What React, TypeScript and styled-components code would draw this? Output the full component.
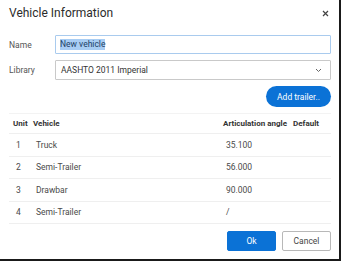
import React from 'react'
import styled, { createGlobalStyle } from 'styled-components'

const GlobalStyle = createGlobalStyle`
  html, body {
    margin: 0;
    padding: 0;
    background: #ffffff;
  }
  * {
    box-sizing: border-box;
  }
`

const trailers = [
  { unit: 1, vehicle: 'Truck', angle: '35.100' },
  { unit: 2, vehicle: 'Semi-Trailer', angle: '56.000' },
  { unit: 3, vehicle: 'Drawbar', angle: '90.000' },
  { unit: 4, vehicle: 'Semi-Trailer', angle: '/' },
]

const App: React.FC = () => {
  return (
    <>
      <GlobalStyle />
      <StyledDialog>
        <StyledHeader>
          <StyledTitle>Vehicle Information</StyledTitle>
          <StyledClose aria-label="Close">
            <svg width="7" height="7" viewBox="0 0 7 7">
              <path d="M1 1 L6 6 M6 1 L1 6" stroke="#444" strokeWidth="1.2" fill="none" />
            </svg>
          </StyledClose>
        </StyledHeader>

        <StyledForm>
          <StyledLabel>Name</StyledLabel>
          <StyledTextField $focused>
            <StyledSelection>New vehicle</StyledSelection>
          </StyledTextField>
          <StyledLabel>Library</StyledLabel>
          <StyledTextField>
            <span style={{ flex: 1 }}>AASHTO 2011 Imperial</span>
            <svg width="7" height="5" viewBox="0 0 7 5">
              <polyline points="1,1 3.5,3.5 6,1" stroke="#666" strokeWidth="1" fill="none" />
            </svg>
          </StyledTextField>
        </StyledForm>

        <StyledActions>
          <StyledPillButton>Add trailer..</StyledPillButton>
        </StyledActions>

        <StyledTable>
          <StyledRow $head>
            <StyledCell $head>Unit</StyledCell>
            <StyledCell $head>Vehicle</StyledCell>
            <StyledCell $head>Articulation angle</StyledCell>
            <StyledCell $head>Default</StyledCell>
          </StyledRow>
          {trailers.map((t) => (
            <StyledRow key={t.unit}>
              <StyledCell>{t.unit}</StyledCell>
              <StyledCell>{t.vehicle}</StyledCell>
              <StyledCell>{t.angle}</StyledCell>
              <StyledCell />
            </StyledRow>
          ))}
        </StyledTable>

        <StyledFooter>
          <StyledButton $primary>Ok</StyledButton>
          <StyledButton>Cancel</StyledButton>
        </StyledFooter>
      </StyledDialog>
    </>
  )
}

const StyledDialog = styled.div`
  width: 341px;
  height: 261px;
  padding: 0 8px 0 9px;
  background: #ffffff;
  border-right: 2px solid #1a1a1a;
  border-bottom: 2px solid #1a1a1a;
  font-family: Roboto, 'Liberation Sans', sans-serif;
  color: #444;
  display: flex;
  flex-direction: column;
`

const StyledHeader = styled.div`
  height: 26px;
  display: flex;
  align-items: center;
  justify-content: space-between;
`

const StyledTitle = styled.div`
  font-size: 12px;
  color: #2b2b2b;
`

const StyledClose = styled.div`
  width: 12px;
  height: 12px;
  display: flex;
  align-items: center;
  justify-content: center;
`

const StyledForm = styled.div`
  margin-top: 9px;
  display: grid;
  grid-template-columns: 46px 1fr;
  grid-template-rows: 19px 20px;
  row-gap: 6px;
  align-items: center;
`

const StyledLabel = styled.div`
  font-size: 8.5px;
  color: #555;
`

const StyledTextField = styled.div<{ $focused?: boolean }>`
  height: 100%;
  display: flex;
  align-items: center;
  padding: 0 8px 0 ${(p) => (p.$focused ? '4px' : '5px')};
  border: 1px solid ${(p) => (p.$focused ? '#a9cbee' : '#c9c9c9')};
  border-radius: 1px;
  font-size: 8.5px;
  color: #333;
`

const StyledSelection = styled.span`
  background: #a8cdf4;
  color: #1c3f66;
  line-height: 11px;
`

const StyledActions = styled.div`
  margin-top: 6px;
  display: flex;
  justify-content: flex-end;
`

const StyledPillButton = styled.button`
  height: 21px;
  width: 65px;
  border: none;
  border-radius: 11px;
  background: #0b72d6;
  color: #ffffff;
  font-family: inherit;
  font-size: 8.5px;
  padding: 0;
`

const StyledTable = styled.div`
  margin-top: 6px;
  border-top: 1px solid #f3f3f3;
  display: flex;
  flex-direction: column;
`

const StyledRow = styled.div<{ $head?: boolean }>`
  display: grid;
  grid-template-columns: 21px 1fr 70px 42px;
  align-items: center;
  height: ${(p) => (p.$head ? '20px' : '22.5px')};
  border-bottom: 1px solid #efefef;
`

const StyledCell = styled.div<{ $head?: boolean }>`
  font-size: ${(p) => (p.$head ? '8px' : '8.5px')};
  white-space: nowrap;
  padding-left: ${(p) => (p.$head ? '4px' : '7px')};
  font-weight: ${(p) => (p.$head ? 700 : 400)};
  color: ${(p) => (p.$head ? '#333' : '#4a4a4a')};
  &:nth-child(2) {
    padding-left: ${(p) => (p.$head ? '3px' : '6px')};
  }
`

const StyledFooter = styled.div`
  margin-top: 7px;
  display: flex;
  justify-content: flex-end;
  gap: 6px;
`

const StyledButton = styled.button<{ $primary?: boolean }>`
  width: 49px;
  height: 20px;
  padding: 0;
  border-radius: 2px;
  font-family: inherit;
  font-size: 8.5px;
  border: 1px solid ${(p) => (p.$primary ? '#0b72d6' : '#b8b8b8')};
  background: ${(p) => (p.$primary ? '#0b72d6' : '#ffffff')};
  color: ${(p) => (p.$primary ? '#ffffff' : '#444')};
`

export default App
